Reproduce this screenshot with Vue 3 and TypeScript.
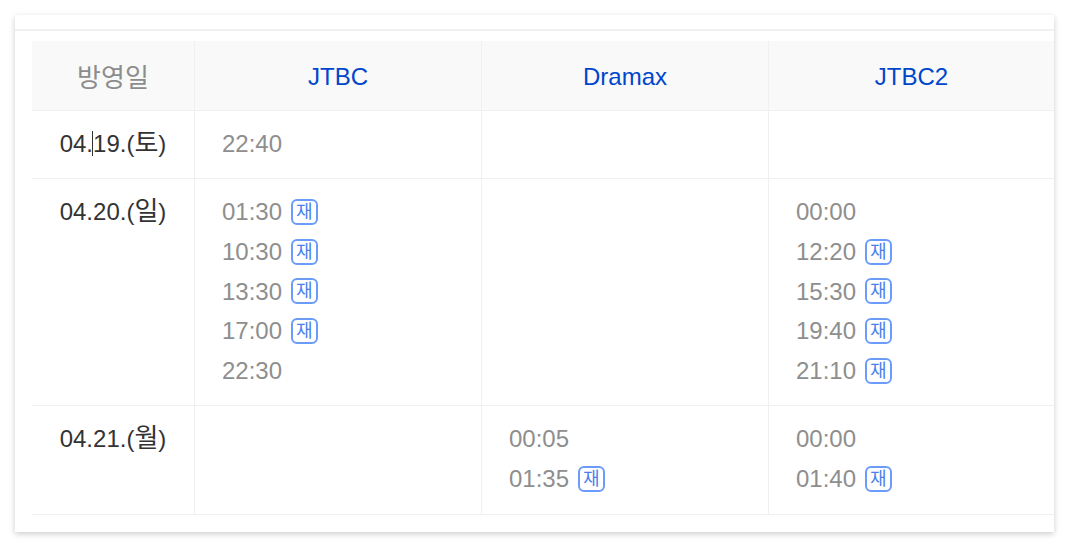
<script setup lang="ts">
interface Slot { t: string; re?: boolean }
interface Row { date: string; day: string; caret?: boolean; cols: Slot[][] }
const headers = ['JTBC', 'Dramax', 'JTBC2']
const rows: Row[] = [
  { date: '04.19.', day: '토', caret: true, cols: [[{ t: '22:40' }], [], []] },
  {
    date: '04.20.',
    day: '일',
    cols: [
      [{ t: '01:30', re: true }, { t: '10:30', re: true }, { t: '13:30', re: true }, { t: '17:00', re: true }, { t: '22:30' }],
      [],
      [{ t: '00:00' }, { t: '12:20', re: true }, { t: '15:30', re: true }, { t: '19:40', re: true }, { t: '21:10', re: true }],
    ],
  },
  {
    date: '04.21.',
    day: '월',
    cols: [
      [],
      [{ t: '00:05' }, { t: '01:35', re: true }],
      [{ t: '00:00' }, { t: '01:40', re: true }],
    ],
  },
]
</script>

<template>
  <div class="page">
    <section class="card">
      <div class="top"></div>
      <div class="body">
        <div class="grid">
          <div class="head first">방영일</div>
          <div v-for="h in headers" :key="h" class="head link">{{ h }}</div>
          <template v-for="r in rows" :key="r.date">
            <div class="date">
              <span class="date-text"><i v-if="r.caret" class="caret"></i>{{ r.date }}(<span class="day">{{ r.day }}</span>)</span>
            </div>
            <div v-for="(c, i) in r.cols" :key="i" class="cell">
              <div v-for="s in c" :key="s.t" class="slot">
                {{ s.t }}<span v-if="s.re" class="badge">재</span>
              </div>
            </div>
          </template>
        </div>
      </div>
    </section>
  </div>
</template>

<style>
html, body { margin: 0; background: #fff; }
</style>

<style scoped>
.page {
  width: 1069px;
  height: 547px;
  padding: 15px;
  box-sizing: border-box;
  font-family: "Liberation Sans", "Noto Sans CJK KR", sans-serif;
  font-size: 24px;
  overflow: hidden;
}
.card {
  width: 1039px;
  height: 517px;
  background: #fff;
  box-shadow: 0 2px 6px rgba(0, 0, 0, 0.2);
}
.top {
  height: 14px;
  border-bottom: 2px solid #f1f1f1;
}
.body { padding: 10px 0 0 17px; }
.grid {
  display: grid;
  grid-template-columns: 163px 287px 287px 285px;
}
.head {
  height: 68.8px;
  background: #f9f9f9;
  border-bottom: 1px solid #f0f0f0;
  border-right: 1px solid #f0f0f0;
  display: flex;
  align-items: center;
  justify-content: center;
}
.head.first { color: #8c8c8c; font-size: 26px; }
.head.link { color: #0046cc; padding-top: 4px; height: 64.8px; }
.head:nth-child(4) { border-right: 0; }
.date, .cell {
  padding: 13px 0 15px;
  line-height: 39.6px;
  border-bottom: 1px solid #f0f0f0;
  border-right: 1px solid #f0f0f0;
}
.date { color: #333; text-align: center; }
.date-text { position: relative; display: inline-block; }
.day { font-size: 26px; line-height: 20px; }
.caret {
  position: absolute;
  left: 32px;
  top: 7px;
  width: 1px;
  height: 25px;
  background: #333;
}
.cell { padding-left: 27px; color: #8e8e8e; }
.cell:nth-child(4n) { border-right: 0; }
.slot { display: flex; align-items: center; height: 39.6px; }
.badge {
  margin-left: 9px;
  width: 26.5px;
  height: 26px;
  box-sizing: border-box;
  border: 2px solid #6b9cfb;
  border-radius: 6px;
  color: #4a80ee;
  font-size: 18px;
  line-height: 23px;
  text-align: center;
}
</style>
